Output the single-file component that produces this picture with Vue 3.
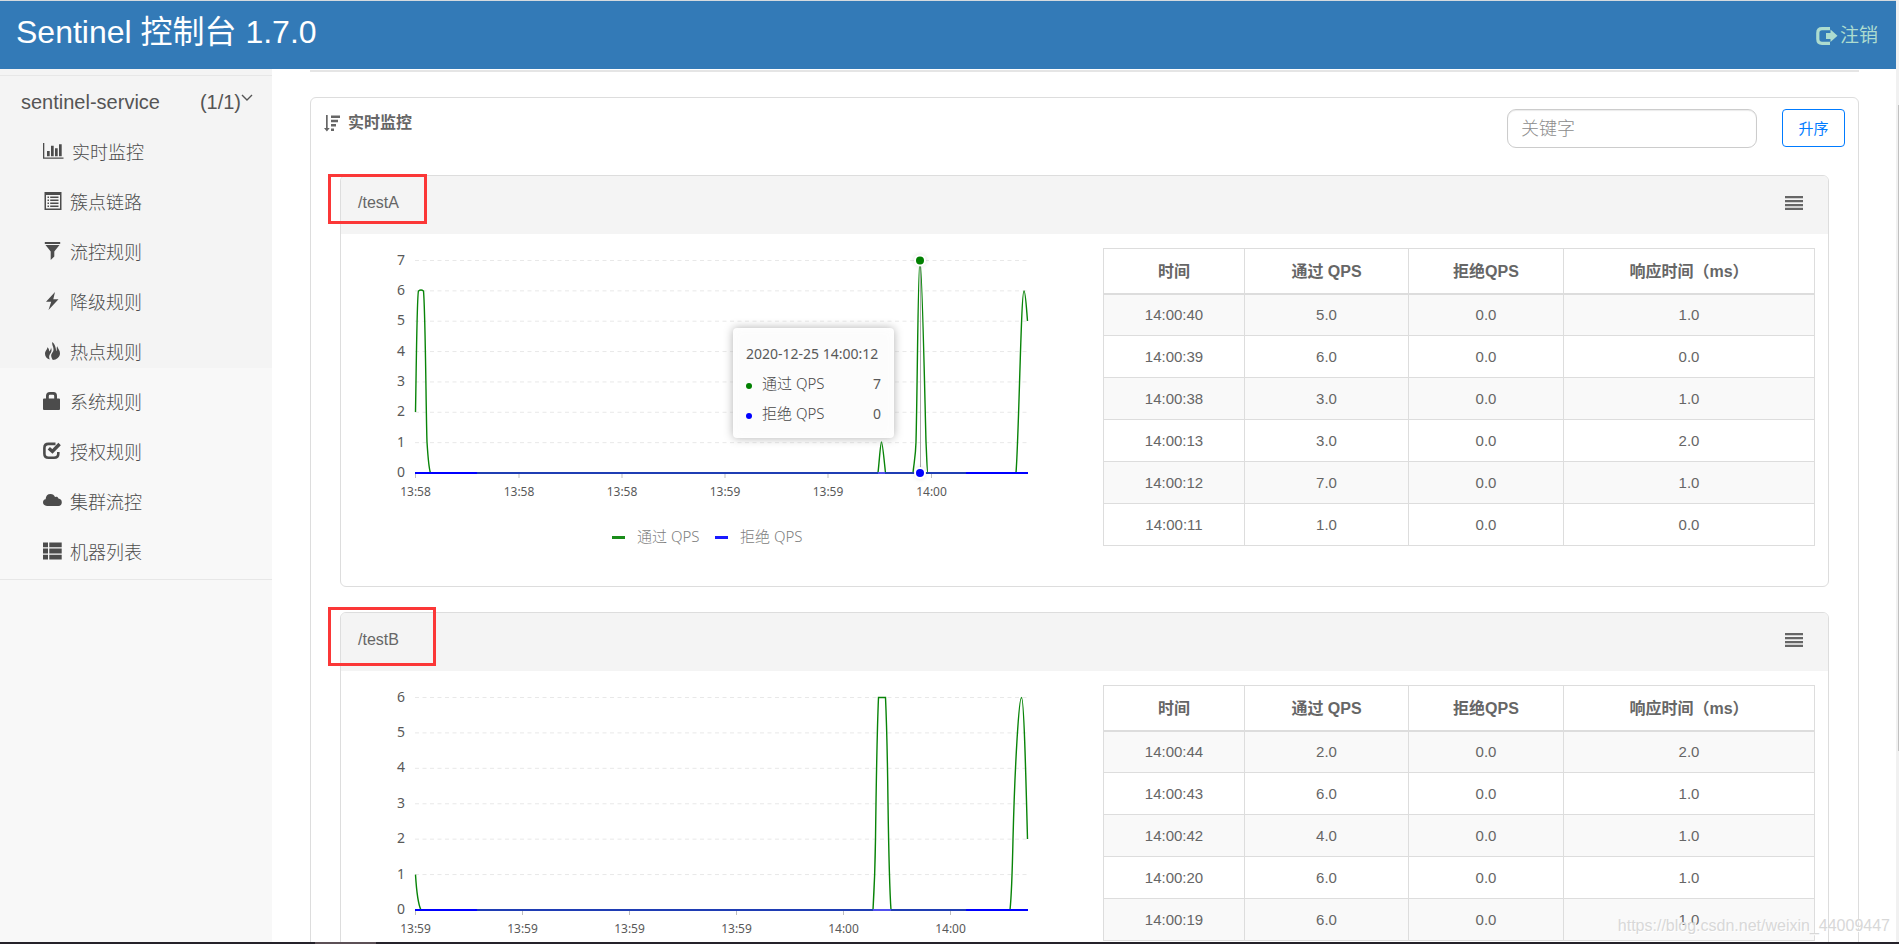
<script setup>
const menu = [
  { icon: 'bars', label: '实时监控' },
  { icon: 'list', label: '簇点链路' },
  { icon: 'filter', label: '流控规则' },
  { icon: 'flash', label: '降级规则' },
  { icon: 'fire', label: '热点规则' },
  { icon: 'lock', label: '系统规则' },
  { icon: 'check', label: '授权规则' },
  { icon: 'cloud', label: '集群流控' },
  { icon: 'rows', label: '机器列表' },
]

const BASE = 239
const TOP = 26.5
const scale = (max) => Array.from({ length: max + 1 }, (_, v) => ({ v, y: BASE - ((BASE - TOP) / max) * v }))

const resources = [
  {
    name: '/testA',
    mark: 'mark-a',
    grid: scale(7),
    ticks: [[60.5, '13:58'], [164, '13:58'], [267, '13:58'], [370, '13:59'], [473, '13:59'], [576.5, '14:00']],
    line: 'M60.5 178 C61.5 120 62 60 63.5 57 Q66 55 68.5 57 C70.5 80 71 180 72 208 C73 224 74 235 75.5 239 H523 C524.5 225 525.5 208 526.5 208 C527.5 208 529 225 530.5 239 H558 C559 228 560.5 224 561 208 C562.5 150 563 26.5 565 26.5 C567 26.5 569.5 150 571 208 C572 228 572 239 573 239 H661 C664 200 666 57 669 57 C670.5 57 671.5 75 672.5 87',
    gaps: [[523, 530]],
    tip: true,
    rows: [
      ['14:00:40', '5.0', '0.0', '1.0'],
      ['14:00:39', '6.0', '0.0', '0.0'],
      ['14:00:38', '3.0', '0.0', '1.0'],
      ['14:00:13', '3.0', '0.0', '2.0'],
      ['14:00:12', '7.0', '0.0', '1.0'],
      ['14:00:11', '1.0', '0.0', '0.0'],
    ],
  },
  {
    name: '/testB',
    mark: 'mark-b',
    grid: scale(6),
    ticks: [[60.5, '13:59'], [167.5, '13:59'], [274.5, '13:59'], [381.5, '13:59'], [488.5, '14:00'], [595.5, '14:00']],
    line: 'M60.5 203.6 C61.5 220 63 233 66 239 H518 C519 222 520 205 520.5 168 C521.5 90 522.5 50 523.5 26.5 H530.5 C532 60 532.5 90 533 132 C534 200 535 225 536 239 H655 C656.5 225 657 215 658 168 C660 90 664 26.5 666.5 26.5 C669 26.5 671 110 672.5 168',
    gaps: [[518, 536]],
    tip: false,
    rows: [
      ['14:00:44', '2.0', '0.0', '2.0'],
      ['14:00:43', '6.0', '0.0', '1.0'],
      ['14:00:42', '4.0', '0.0', '1.0'],
      ['14:00:20', '6.0', '0.0', '1.0'],
      ['14:00:19', '6.0', '0.0', '1.0'],
    ],
  },
]
</script>

<template>
  <div class="page">
    <header class="topbar">
      <h1>Sentinel 控制台 1.7.0</h1>
      <a class="logout" href="#">
        <svg width="22" height="18" viewBox="0 0 22 18" aria-hidden="true">
          <path d="M14 1.7H6Q1.8 1.7 1.8 6V12Q1.8 16.3 6 16.3H14" fill="none" stroke="currentColor" stroke-width="3.2" />
          <path d="M10 6H14.5V2.5L21.5 8.8L14.5 15V12H10Z" fill="currentColor" />
        </svg>
        <span>注销</span>
      </a>
    </header>

    <div class="body">
      <aside class="sidebar">
        <nav class="nav">
          <a class="service" href="#">
            <span>sentinel-service</span>
            <span class="count">(1/1)<svg width="12" height="8" viewBox="0 0 12 8" aria-hidden="true"><path d="M1 1L6 6L11 1" fill="none" stroke="currentColor" stroke-width="1.4" /></svg></span>
          </a>
          <ul>
            <li v-for="m in menu" :key="m.label">
              <a href="#">
                <svg v-if="m.icon === 'bars'" width="21" height="16" viewBox="0 0 21 16" fill="currentColor" aria-hidden="true">
                  <path d="M0 0H1.3V14.4H20.5V15.7H0ZM4 8H6.7V13.2H4ZM8 2.7H10.7V13.2H8ZM12 5.3H14.7V13.2H12ZM16 1.3H18.7V13.2H16Z" />
                </svg>
                <svg v-else-if="m.icon === 'list'" width="19" height="18" viewBox="0 0 19 18" fill="currentColor" aria-hidden="true">
                  <path fill-rule="evenodd" d="M1.5 0H18.5V18H1.5ZM3 3V16.5H17V3Z" />
                  <path d="M4.5 4.5H6V6H4.5ZM7.2 4.5H15.5V6H7.2ZM4.5 7.5H6V9H4.5ZM7.2 7.5H15.5V9H7.2ZM4.5 10.5H6V12H4.5ZM7.2 10.5H15.5V12H7.2ZM4.5 13.5H6V15H4.5ZM7.2 13.5H15.5V15H7.2Z" />
                </svg>
                <svg v-else-if="m.icon === 'filter'" width="19" height="18" viewBox="0 0 19 18" fill="currentColor" aria-hidden="true">
                  <path d="M1.8 0H17.2V2H1.8ZM2.5 3H16.5L11.3 9.5V14.5L7.7 18V9.5Z" />
                </svg>
                <svg v-else-if="m.icon === 'flash'" width="19" height="18" viewBox="0 0 19 18" fill="currentColor" aria-hidden="true">
                  <path d="M12 0L3 9.8H8.2L5.5 18L15.5 7.2H10.3Z" />
                </svg>
                <svg v-else-if="m.icon === 'fire'" width="19" height="18" viewBox="0 0 19 18" fill="currentColor" aria-hidden="true">
                  <path d="M9.3 0C8.6 3 10.8 4.8 10.5 8C10.4 9.8 8.8 11 8.3 12.5C7.8 14 8.6 16 9.8 18C13.5 17.6 17 15.3 17 11.2C17 8.3 15 6.8 14.2 4.2C13.2 6 14.3 7.8 13.2 9.3C12.8 5.5 12 2.2 9.3 0Z" />
                  <path d="M4.3 5.3C4.6 7.3 2 8.8 2 11.8C2 14.8 4 16.6 6.8 17.6C5.8 15.8 6 13.6 7.3 11.6C8.3 10 9.3 8.2 8 5.4C8 7 7.2 8.4 6.2 9.4C6.3 7.8 5.6 6.3 4.3 5.3Z" />
                </svg>
                <svg v-else-if="m.icon === 'lock'" width="19" height="18" viewBox="0 0 19 18" fill="currentColor" aria-hidden="true">
                  <path d="M1 6.5H3V4Q3 0 7 0H10.5Q14 0 14 4V6.5H16Q17 6.5 17 7.5V17Q17 18 16 18H1Q0 18 0 17V7.5Q0 6.5 1 6.5ZM5.8 6.5H11.2V4Q11.2 2.8 10 2.8H7Q5.8 2.8 5.8 4Z" />
                </svg>
                <svg v-else-if="m.icon === 'check'" width="19" height="18" viewBox="0 0 19 18" aria-hidden="true">
                  <path d="M12.5 1.9H5.5Q1.4 1.9 1.4 6V11.8Q1.4 15.8 5.5 15.8H11Q15.3 15.8 15.3 11.8V10" fill="none" stroke="currentColor" stroke-width="2.6" />
                  <path d="M5.8 6.2L9.4 9.4L16.6 2" fill="none" stroke="currentColor" stroke-width="3.4" />
                </svg>
                <svg v-else-if="m.icon === 'cloud'" width="19" height="18" viewBox="0 0 19 18" fill="currentColor" aria-hidden="true">
                  <path d="M4 14Q0 13.6 0 10.3Q0 7.6 2.6 7.2Q3 2 7.5 2Q10.8 2 12 5Q13 4.4 14 4.8Q15.2 5.3 15.4 6.6Q18.8 7.2 18.8 10.4Q18.6 13.7 15.4 14Z" />
                </svg>
                <svg v-else width="19" height="18" viewBox="0 0 19 18" fill="currentColor" aria-hidden="true">
                  <path d="M0 .5H5V5.3H0ZM6.3 .5H18.7V5.3H6.3ZM0 6.6H5V11.4H0ZM6.3 6.6H18.7V11.4H6.3ZM0 12.7H5V17.5H0ZM6.3 12.7H18.7V17.5H6.3Z" />
                </svg>
                <span>{{ m.label }}</span>
              </a>
            </li>
          </ul>
        </nav>
      </aside>

      <main class="main">
        <hr />
        <section class="panel">
          <div class="panel-head">
            <h2>
              <svg width="16" height="17" viewBox="0 0 16 17" fill="currentColor" aria-hidden="true">
                <path d="M2 0H3.7V13H5.7L2.9 16.5L0 13H2ZM7 .5H16V3H7ZM7 4.8H14V7.2H7ZM7 9H12V11.4H7ZM7 13.4H10V16H7Z" />
              </svg>
              <span>实时监控</span>
            </h2>
            <input class="search" type="text" placeholder="关键字" aria-label="关键字" />
            <button class="order" type="button">升序</button>
          </div>

          <article v-for="r in resources" :key="r.name" class="card">
            <div class="card-head">
              <span>{{ r.name }}</span>
              <button class="toggle" type="button" aria-label="菜单">
                <svg width="18" height="14" viewBox="0 0 18 14" fill="currentColor" aria-hidden="true">
                  <path d="M0 0H18V2.3H0ZM0 4H18V6.3H0ZM0 8H18V10.3H0ZM0 11.7H18V14H0Z" />
                </svg>
              </button>
            </div>
            <div class="card-body">
              <svg class="chart" viewBox="0 0 734 352">
                <g v-for="g in r.grid" :key="g.v">
                  <line v-if="g.v" x1="60" x2="673" :y1="g.y" :y2="g.y" class="grid" />
                  <text class="ylab" x="50" :y="g.y + 4">{{ g.v }}</text>
                </g>
                <g v-for="(t, i) in r.ticks" :key="i">
                  <line :x1="t[0]" :x2="t[0]" y1="239" y2="244" class="tick" />
                  <text class="xlab" :x="t[0]" y="262">{{ t[1] }}</text>
                </g>
                <line v-if="r.tip" x1="565.5" x2="565.5" y1="26" y2="239" class="cross" />
                <path :d="r.line" class="pass" />
                <line x1="60" x2="673" y1="239" y2="239" class="block" />
                <line x1="122" x2="611" y1="239" y2="239" class="block mid" />
                <line v-for="g in r.gaps" :key="g[0]" :x1="g[0]" :x2="g[1]" y1="239" y2="239" class="block gap" />
                <g v-if="r.tip">
                  <circle class="halo" cx="565" cy="26.5" r="6" />
                  <circle class="halo" cx="565" cy="239" r="6" />
                  <circle cx="565" cy="26.5" r="4" fill="#008000" />
                  <circle cx="565" cy="239" r="4" fill="#0000ff" />
                </g>
                <g class="legend">
                  <line x1="257" x2="270" y1="303.5" y2="303.5" class="dash-pass" />
                  <text x="282" y="308">通过 QPS</text>
                  <line x1="360" x2="373" y1="303.5" y2="303.5" class="dash-block" />
                  <text x="385" y="308">拒绝 QPS</text>
                </g>
                <g v-if="r.tip" class="tip">
                  <rect x="378" y="94" width="161" height="110" rx="4" />
                  <text x="391" y="125">2020-12-25 14:00:12</text>
                  <circle cx="394" cy="152" r="3" fill="#008000" />
                  <text class="series" x="407" y="155">通过 QPS</text>
                  <text x="526" y="155" text-anchor="end">7</text>
                  <circle cx="394" cy="182" r="3" fill="#0000ff" />
                  <text class="series" x="407" y="185">拒绝 QPS</text>
                  <text x="526" y="185" text-anchor="end">0</text>
                </g>
              </svg>
              <div class="table-wrap">
                <table>
                  <colgroup><col class="c1" /><col class="c2" /><col class="c3" /><col /></colgroup>
                  <thead>
                    <tr><th>时间</th><th>通过 QPS</th><th>拒绝QPS</th><th>响应时间（ms）</th></tr>
                  </thead>
                  <tbody>
                    <tr v-for="row in r.rows" :key="row[0]">
                      <td v-for="(c, i) in row" :key="i">{{ c }}</td>
                    </tr>
                  </tbody>
                </table>
              </div>
            </div>
            <div class="mark" :class="r.mark"></div>
          </article>
        </section>
      </main>
    </div>

    <div class="scrollbar"></div>
    <div class="bottom-strip"></div>
    <div class="watermark">https://blog.csdn.net/weixin_44009447</div>
  </div>
</template>

<style>
body {
  margin: 0;
  overflow: hidden;
}
</style>

<style scoped>
* {
  box-sizing: border-box;
}
.page {
  position: relative;
  display: flex;
  flex-direction: column;
  height: 100vh;
  padding-right: 3px;
  overflow: hidden;
  background: #fff;
  color: #555;
  font-family: "Liberation Sans", "Noto Sans CJK SC", sans-serif;
}
a {
  color: inherit;
  text-decoration: none;
}
.topbar {
  flex: none;
  display: flex;
  justify-content: space-between;
  align-items: center;
  height: 69px;
  padding: 2px 18px 0 16px;
  border-top: 1px solid #d5dade;
  background: #337ab7;
}
.topbar h1 {
  margin: 0 0 8px;
  color: #fff;
  font-size: 32px;
  line-height: 40px;
  font-weight: 400;
}
.logout {
  display: flex;
  align-items: center;
  gap: 2px;
  color: #addccf;
  font-size: 19px;
  line-height: 28px;
  font-weight: 400;
}
.body {
  flex: 1;
  display: flex;
  min-height: 0;
}
.sidebar {
  flex: none;
  width: 272px;
  padding-top: 6px;
  background: linear-gradient(#f4f4f4, #f4f4f4) no-repeat #f8f8f8;
  background-size: 100% 299px;
}
.nav {
  border-top: 1px solid #e7e7e7;
  border-bottom: 1px solid #e7e7e7;
  padding-bottom: 3px;
}
.service {
  display: flex;
  justify-content: space-between;
  align-items: center;
  height: 50px;
  padding: 2px 19px 0 21px;
  font-size: 20px;
}
.count svg {
  vertical-align: 7px;
}
.nav ul {
  margin: 0;
  padding: 0;
  list-style: none;
}
.nav li a {
  display: flex;
  align-items: center;
  gap: 8px;
  height: 50px;
  padding-left: 43px;
  color: #4c4c4c;
  font-size: 18px;
  font-weight: 300;
}
.main {
  flex: 1;
  min-width: 0;
  padding: 1px 37px 0 38px;
  overflow: hidden;
}
hr {
  height: 2px;
  margin: 0 0 25px;
  border: 0;
  background: #e5e5e5;
}
.panel {
  padding: 0 29px 25px;
  border: 1px solid #ddd;
  border-radius: 6px;
}
.panel-head {
  display: flex;
  align-items: flex-start;
  gap: 25px;
  height: 77px;
  margin: 0 -16px;
  padding-top: 11px;
}
.panel-head h2 {
  display: flex;
  align-items: center;
  gap: 8px;
  margin: 0 auto 0 0;
  color: #666;
  font-size: 16px;
  line-height: 28px;
  font-weight: 700;
}
.search {
  width: 250px;
  height: 39px;
  padding: 1px 13px 0;
  border: 1px solid #ccc;
  border-radius: 9px;
  background: #fff;
  box-shadow: inset 0 1px 1px rgba(0, 0, 0, 0.08);
  color: #555;
  font: 300 18px "Liberation Sans", "Noto Sans CJK SC", sans-serif;
}
.search::placeholder {
  color: #8c8c8c;
}
.order {
  width: 63px;
  height: 38px;
  padding: 0 0 2px;
  border: 1px solid #007bff;
  border-radius: 4px;
  background: #fff;
  color: #007bff;
  font: 400 15px "Liberation Sans", "Noto Sans CJK SC", sans-serif;
}
.card {
  position: relative;
  margin-bottom: 25px;
  border: 1px solid #ddd;
  border-radius: 6px;
}
.card-head {
  display: flex;
  justify-content: space-between;
  align-items: center;
  height: 58px;
  padding: 0 25px 5px 17px;
  border-radius: 5px 5px 0 0;
  background: #f4f4f4;
  color: #666;
  font-size: 16px;
}
.toggle {
  display: flex;
  padding: 1px 0 0;
  border: 0;
  background: none;
  color: #666;
}
.card-body {
  display: grid;
  grid-template-columns: 734fr 712fr;
  gap: 14px;
  align-items: start;
  padding: 0 13px 0 14px;
}
.chart {
  display: block;
  width: 100%;
  font-family: "Noto Sans", "Noto Sans CJK SC", sans-serif;
}
.grid {
  stroke: #e8e8e8;
  stroke-dasharray: 4 3.5;
}
.tick {
  stroke: #bfbfbf;
}
.ylab {
  fill: #595959;
  font-size: 14px;
  text-anchor: end;
}
.xlab {
  fill: #595959;
  font-size: 12px;
  text-anchor: middle;
}
.cross {
  stroke: #aaa;
}
.pass {
  fill: none;
  stroke: #088408;
  stroke-width: 1.4;
}
.block {
  stroke: #00f;
  stroke-width: 2;
}
.mid {
  stroke: #1f3db4;
}
.gap {
  stroke: #5050ee;
}
.halo {
  fill: #fff;
  filter: drop-shadow(0 0 2px rgba(0, 0, 0, 0.12));
}
.legend {
  fill: #808080;
  font-size: 15px;
  font-weight: 300;
}
.dash-pass {
  stroke: #1a8c1a;
  stroke-width: 3;
}
.dash-block {
  stroke: #1a1aff;
  stroke-width: 3;
}
.tip {
  fill: #595959;
  font-size: 14px;
}
.series {
  font-size: 15px;
  font-weight: 300;
  fill: #484848;
}
.tip rect {
  fill: #fff;
  fill-opacity: 0.97;
  filter: drop-shadow(0 0 5px #aeaeae);
}
.table-wrap {
  padding-top: 14px;
}
table {
  width: 100%;
  border-collapse: collapse;
  table-layout: fixed;
  color: #666;
  font-size: 15px;
  text-align: center;
}
.c1 {
  width: 141px;
}
.c2 {
  width: 164px;
}
.c3 {
  width: 155px;
}
th,
td {
  height: 42px;
  padding: 0;
  border: 1px solid #ddd;
}
th {
  height: 45px;
  padding-bottom: 2px;
  border-bottom-width: 2px;
  font-size: 16px;
}
tbody tr:nth-child(odd) {
  background: #f9f9f9;
}
.mark {
  position: absolute;
  left: -13px;
  border: 3px solid #fb3737;
}
.mark-a {
  top: -2px;
  width: 99px;
  height: 50px;
}
.mark-b {
  top: -6px;
  width: 108px;
  height: 59px;
}
.scrollbar {
  position: absolute;
  top: 0;
  right: 0;
  bottom: 0;
  width: 3px;
  background: linear-gradient(#c1c1c1, #c1c1c1) no-repeat right 105px / 1px 646px #f1f1f1;
}
.bottom-strip {
  position: absolute;
  right: 0;
  bottom: 0;
  left: 0;
  height: 2px;
  background: linear-gradient(#5c5056, #5c5056) no-repeat 315px 0 / 61px 2px #25222a;
}
.watermark {
  position: absolute;
  right: 9px;
  bottom: 8px;
  color: #d8d8d8;
  font-size: 16px;
  line-height: 20px;
  text-shadow: 1px 1px 0 #fff;
}
</style>
